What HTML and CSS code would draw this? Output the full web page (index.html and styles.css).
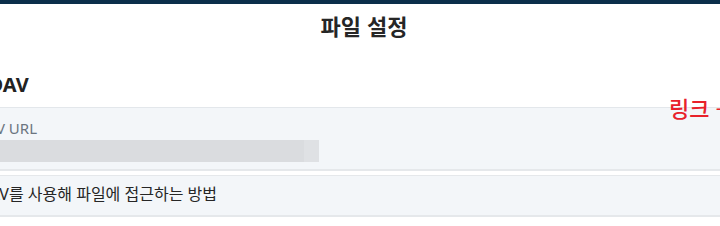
FILE: index.html
```html
<!DOCTYPE html>
<html lang="ko">
<head>
<meta charset="utf-8">
<link rel="stylesheet" href="styles.css">
</head>
<body>
<div class="topbar"></div>
<h1 class="title">파일 설정</h1>
<section class="section">
  <h2 class="heading">WebDAV</h2>
  <a class="copy-link">링크 <span class="arrow">→</span></a>
  <div class="box box-url">
    <div class="label">WebDAV URL</div>
    <div class="skeleton"></div>
  </div>
  <div class="box box-help">
    <div class="help">WebDAV를 사용해 파일에 접근하는 방법</div>
  </div>
</section>
</body>
</html>
```
FILE: styles.css
```css
html, body {
  margin: 0;
  padding: 0;
  overflow: hidden;
  background: #ffffff;
}
body {
  width: 720px;
  height: 226px;
  font-family: "Noto Sans", "Noto Sans CJK KR", sans-serif;
  color: #262626;
}
.topbar {
  height: 4px;
  background: #0b2e4a;
}
.title {
  margin: 6px 0 0;
  padding-left: 8px;
  font-family: "Noto Sans CJK KR", sans-serif;
  font-size: 22px;
  line-height: 30px;
  font-weight: 700;
  text-align: center;
  color: #262626;
}
.section {
  position: relative;
  margin-left: -55px;
  width: 860px;
  margin-top: 30px;
}
.heading {
  margin: 0;
  font-size: 20px;
  line-height: 30px;
  font-weight: 700;
  color: #222;
  height: 37px;
}
.copy-link {
  position: absolute;
  left: 724px;
  top: 21px;
  font-family: "Noto Sans CJK KR", sans-serif;
  font-size: 22px;
  line-height: 32px;
  font-weight: 500;
  color: #e8212b;
  white-space: nowrap;
  z-index: 2;
}
.arrow {
  font-weight: 400;
}
.box {
  background: #f3f6f9;
  border-top: 1px solid #e3e7eb;
  border-bottom: 2px solid #e5e8eb;
}
.box-url {
  padding: 10px 0 7px;
}
.label {
  font-size: 15px;
  line-height: 20px;
  color: #6b7580;
}
.skeleton {
  margin-top: 2px;
  width: 374px;
  height: 22px;
  background: linear-gradient(90deg, #dadcdf 0%, #dadcdf 96%, #dfe1e4 96%, #dfe1e4 100%);
}
.box-help {
  margin-top: 4px;
  padding: 6px 0 9px;
  border-top-color: #e5e8eb;
}
.help {
  font-family: "Noto Sans", "Noto Sans CJK KR", sans-serif;
  font-size: 16px;
  line-height: 24px;
  color: #262626;
}
```
